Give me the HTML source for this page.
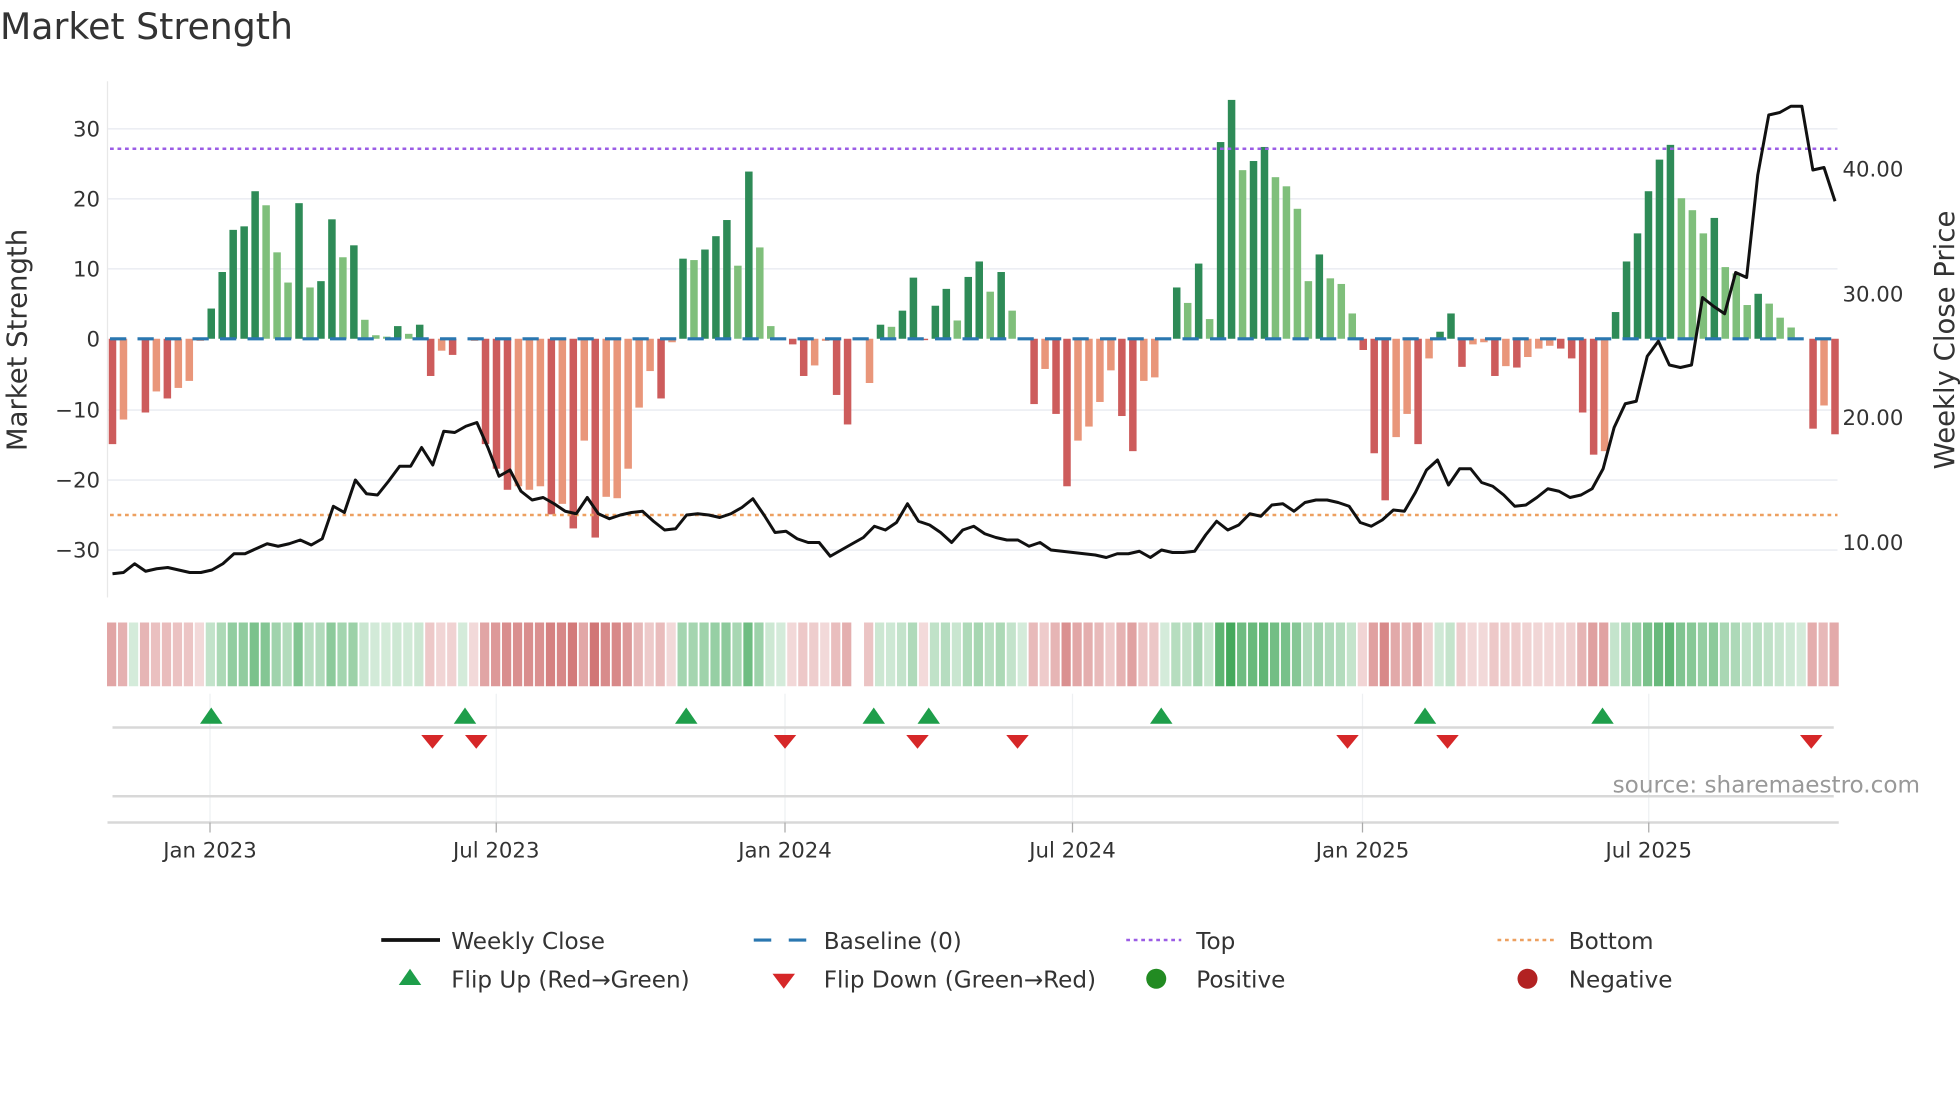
<!DOCTYPE html>
<html><head><meta charset="utf-8"><style>
html,body{margin:0;padding:0;background:#fff;width:1960px;height:1102px;overflow:hidden}
svg{display:block}
text{font-family:"DejaVu Sans","Liberation Sans",sans-serif;fill:#333}
</style></head><body>
<svg id="s" width="1960" height="1102" viewBox="0 0 1568 881.6" xmlns="http://www.w3.org/2000/svg">
<rect width="1568" height="882" fill="#fff"/>
<text x="0" y="31" font-size="29" fill="#333">Market Strength</text>
<g id="grid" stroke="#eceef3" stroke-width="1.3">
<line x1="86" x2="1470" y1="103" y2="103"/><line x1="86" x2="1470" y1="159" y2="159"/>
<line x1="86" x2="1470" y1="215" y2="215"/><line x1="86" x2="1470" y1="328" y2="328"/>
<line x1="86" x2="1470" y1="384" y2="384"/><line x1="86" x2="1470" y1="440" y2="440"/>
</g>
<line x1="86" x2="86" y1="65" y2="478" stroke="#e8e8e8" stroke-width="1"/>
<g font-size="17" text-anchor="end">
<text x="80" y="109">30</text><text x="80" y="165">20</text><text x="80" y="221">10</text>
<text x="80" y="277">0</text><text x="80" y="334">−10</text><text x="80" y="390">−20</text><text x="80" y="446">−30</text>
</g>
<g font-size="17">
<text x="1474" y="141">40.00</text><text x="1474" y="241">30.00</text>
<text x="1474" y="340">20.00</text><text x="1474" y="440">10.00</text>
</g>
<text transform="translate(21,272) rotate(-90)" font-size="22" text-anchor="middle">Market Strength</text>
<text transform="translate(1563,272) rotate(-90)" font-size="22" text-anchor="middle">Weekly Close Price</text>
<g id="bars"></g>
<line x1="88" x2="1470" y1="271" y2="271" stroke="#2a77b0" stroke-width="2.5" stroke-dasharray="13,9"/>
<line x1="88" x2="1470" y1="119" y2="119" stroke="#9b5de5" stroke-width="2" stroke-dasharray="3,3"/>
<line x1="88" x2="1470" y1="412" y2="412" stroke="#eda060" stroke-width="2" stroke-dasharray="3,3"/>
<polyline id="price" fill="none" stroke="#111" stroke-width="2.4" stroke-linejoin="round"/>
<g id="strip"></g>
<g stroke="#eef0f2" stroke-width="1">
<line x1="168" x2="168" y1="555" y2="658"/><line x1="397" x2="397" y1="555" y2="658"/>
<line x1="628" x2="628" y1="555" y2="658"/><line x1="858" x2="858" y1="555" y2="658"/>
<line x1="1090" x2="1090" y1="555" y2="658"/><line x1="1319" x2="1319" y1="555" y2="658"/>
</g>
<line x1="90" x2="1467" y1="582" y2="582" stroke="#d8d8d8" stroke-width="2"/>
<line x1="90" x2="1467" y1="637" y2="637" stroke="#d8d8d8" stroke-width="2"/>
<line x1="86" x2="1471" y1="658" y2="658" stroke="#d8d8d8" stroke-width="2"/>
<g id="tri"></g>
<g stroke="#aaa" stroke-width="1">
<line x1="168" x2="168" y1="658" y2="666"/><line x1="397" x2="397" y1="658" y2="666"/>
<line x1="628" x2="628" y1="658" y2="666"/><line x1="858" x2="858" y1="658" y2="666"/>
<line x1="1090" x2="1090" y1="658" y2="666"/><line x1="1319" x2="1319" y1="658" y2="666"/>
</g>
<g font-size="17" text-anchor="middle">
<text x="168" y="686">Jan 2023</text><text x="397" y="686">Jul 2023</text>
<text x="628" y="686">Jan 2024</text><text x="858" y="686">Jul 2024</text>
<text x="1090" y="686">Jan 2025</text><text x="1319" y="686">Jul 2025</text>
</g>
<text x="1536" y="634" font-size="18.5" text-anchor="end" fill="#999" style="fill:#999">source: sharemaestro.com</text>
<g font-size="18.5">
<line x1="305" x2="352" y1="752" y2="752" stroke="#111" stroke-width="3"/>
<text x="361" y="759">Weekly Close</text>
<line x1="603" x2="617" y1="752" y2="752" stroke="#2a77b0" stroke-width="2.5"/>
<line x1="631" x2="645" y1="752" y2="752" stroke="#2a77b0" stroke-width="2.5"/>
<text x="659" y="759">Baseline (0)</text>
<line x1="901" x2="945" y1="752" y2="752" stroke="#9b5de5" stroke-width="2" stroke-dasharray="3,3"/>
<text x="957" y="759">Top</text>
<line x1="1198" x2="1243" y1="752" y2="752" stroke="#eda060" stroke-width="2" stroke-dasharray="3,3"/>
<text x="1255" y="759">Bottom</text>
<polygon points="319,788 337,788 328,775" fill="#1e9e4a"/>
<text x="361" y="790">Flip Up (Red→Green)</text>
<polygon points="618,779 636,779 627,791" fill="#d62728"/>
<text x="659" y="790">Flip Down (Green→Red)</text>
<circle cx="925" cy="783" r="8" fill="#228b22"/>
<text x="957" y="790">Positive</text>
<circle cx="1222" cy="783" r="8" fill="#b22222"/>
<text x="1255" y="790">Negative</text>
</g>
</svg>
<script>
var NS="http://www.w3.org/2000/svg";
var B=[[-15,1],[-11.5,0],[0,0],[-10.5,1],[-7.5,0],[-8.5,1],[-7,0],[-6,0],[-0.3,0],[4.3,1],[9.5,1],[15.5,1],[16,1],[21,1],[19,0],[12.3,0],[8,0],[19.3,1],[7.3,0],[8.2,1],[17,1],[11.6,0],[13.3,1],[2.7,0],[0.5,0],[0.3,0],[1.8,1],[0.7,0],[2,1],[-5.3,1],[-1.7,0],[-2.3,1],[0,0],[-0.3,0],[-15,1],[-18.5,1],[-21.5,1],[-21,0],[-21.5,0],[-21,0],[-25,1],[-23.5,0],[-27,1],[-14.5,0],[-28.3,1],[-22.5,0],[-22.7,0],[-18.5,0],[-9.8,0],[-4.6,0],[-8.5,1],[-0.5,0],[11.4,1],[11.2,0],[12.7,1],[14.6,1],[16.9,1],[10.4,0],[23.8,1],[13,0],[1.8,0],[0,0],[-0.8,1],[-5.3,1],[-3.8,0],[-0.3,0],[-8,1],[-12.2,1],[0,0],[-6.3,0],[2,1],[1.7,0],[4,1],[8.7,1],[-0.2,1],[4.7,1],[7.1,1],[2.6,0],[8.8,1],[11,1],[6.7,0],[9.5,1],[4,0],[0,0],[-9.3,1],[-4.3,0],[-10.7,1],[-21,1],[-14.5,0],[-12.5,0],[-9,0],[-4.5,0],[-11,1],[-16,1],[-6,0],[-5.5,0],[0,0],[7.3,1],[5.1,0],[10.7,1],[2.8,0],[28,1],[34,1],[24,0],[25.3,1],[27.3,1],[23,0],[21.7,0],[18.5,0],[8.2,0],[12,1],[8.6,0],[7.8,0],[3.6,0],[-1.6,1],[-16.3,1],[-23,1],[-14,0],[-10.7,0],[-15,1],[-2.8,0],[1,1],[3.6,1],[-4,1],[-0.8,0],[-0.5,0],[-5.3,1],[-3.9,0],[-4.1,1],[-2.6,0],[-1.4,0],[-1,0],[-1.4,1],[-2.8,1],[-10.5,1],[-16.5,1],[-16,0],[3.8,1],[11,1],[15,1],[21,1],[25.5,1],[27.6,1],[20,0],[18.3,0],[15,0],[17.2,1],[10.2,0],[9.3,0],[4.8,0],[6.4,1],[5,0],[3,0],[1.6,0],[0,0],[-12.8,1],[-9.5,0],[-13.6,1]];
var n=B.length,x0=90,x1=1468,st=(x1-x0)/(n-1),bars=document.getElementById('bars'),strip=document.getElementById('strip');
function el(t,a,p){var e=document.createElementNS(NS,t);for(var k in a)e.setAttribute(k,a[k]);p.appendChild(e);return e;}
for(var i=0;i<n;i++){var v=B[i][0],d=B[i][1],x=x0+i*st,y0=271,h=Math.abs(v)*5.62;
 var c=v>=0?(d?'#2e8b57':'#7fbf7b'):(d?'#cd5c5c':'#e9967a');
 if(h>0.3)el('rect',{x:x-3,y:v>=0?y0-h:y0,width:6,height:h,fill:c},bars);
 var sx=x-st/2, a=Math.min(1,0.22+Math.abs(v)/30*0.65);
 var col=v>=0?'rgba(60,165,85,'+a+')':'rgba(200,90,90,'+a+')';
 if(Math.abs(v)<0.05&&i==68)continue;
 el('rect',{x:sx,y:498,width:st-1.4,height:51,fill:col},strip);}
var P=[459,458,451,457,455,454,456,458,458,456,451,443,443,439,435,437,435,432,436,431,405,410,384,395,396,385,373,373,358,372,345,346,341,338,358,381,376,393,400,398,403,409,411,398,411,415,412,410,409,417,424,423,412,411,412,414,411,406,399,412,426,425,431,434,434,445,440,435,430,421,424,418,403,417,420,426,434,424,421,427,430,432,432,437,434,440,441,442,443,444,446,443,443,441,446,440,442,442,441,428,417,424,420,411,413,404,403,409,402,400,400,402,405,418,421,416,408,409,394,376,368,388,375,375,386,389,396,405,404,398,391,393,398,396,391,375,342,323,321,285,273,292,294,292,238,245,251,218,222,140,92,90,85,85,136,134,161];
var pst=(1468-90)/(P.length-1),pts=[];for(var j=0;j<P.length;j++)pts.push((90+j*pst).toFixed(1)+','+P[j]);
document.getElementById('price').setAttribute('points',pts.join(' '));
var tri=document.getElementById('tri');
[169,372,549,699,743,929,1140,1282].forEach(function(x){el('polygon',{points:(x-9)+',579 '+(x+9)+',579 '+x+',566',fill:'#1e9e4a'},tri);});
[346,381,628,734,814,1078,1158,1449].forEach(function(x){el('polygon',{points:(x-9)+',588 '+(x+9)+',588 '+x+',599',fill:'#d62728'},tri);});
</script>
</body></html>
